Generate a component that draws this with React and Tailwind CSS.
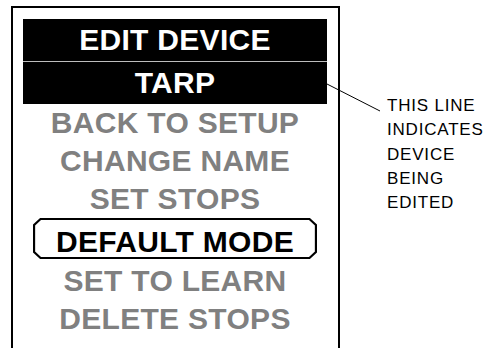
import React from 'react';

const menu = ['BACK TO SETUP', 'CHANGE NAME', 'SET STOPS'];
const menuAfter = ['SET TO LEARN', 'DELETE STOPS'];

// chamfered outline round the selected item
const SelectedItem = ({ label }) => (
  <div className="relative mx-[20px] mb-[3px] h-[41px] pt-[9px] text-center leading-[30px] text-black">
    <svg className="absolute inset-0 h-full w-full" viewBox="0 0 264 41" preserveAspectRatio="none">
      <polygon points="7,1 257,1 263,7 263,34 257,40 7,40 1,34 1,7" fill="none" stroke="#000" strokeWidth="2" />
    </svg>
    <span className="relative">{label}</span>
  </div>
);

export default function App() {
  return (
    <div className="relative flex h-[348px] w-[503px] overflow-hidden bg-white" style={{ fontFamily: '"Liberation Sans", Arial, sans-serif' }}>
      {/* screen frame */}
      <div className="ml-[11px] mt-[6px] h-[342px] w-[329px] border-2 border-b-0 border-black pl-[10px] pr-[11px] pt-[11px]">
        <div className="text-[30px] font-bold tracking-[0.3px]">
          <div className="h-[42px] bg-black text-center leading-[42px] text-white">EDIT DEVICE</div>
          <div className="h-[43px] border-t border-[#bdbdbd] bg-black text-center leading-[42px] text-white">TARP</div>
        </div>
        <div className="-mx-[10px] text-[30px] font-bold tracking-[0.3px]">
          {menu.map((m) => (
            <div key={m} className="h-[38px] text-center leading-[38px] text-[#808080]">{m}</div>
          ))}
          <SelectedItem label="DEFAULT MODE" />
          {menuAfter.map((m) => (
            <div key={m} className="h-[38px] text-center leading-[38px] text-[#808080]">{m}</div>
          ))}
        </div>
      </div>

      {/* note */}
      <div className="ml-[47px] pt-[94px] text-[17px] leading-[24.25px] tracking-[0.8px] text-black">
        <div>THIS LINE</div>
        <div>INDICATES</div>
        <div>DEVICE</div>
        <div>BEING</div>
        <div>EDITED</div>
      </div>

      {/* leader line */}
      <svg className="pointer-events-none absolute left-0 top-0" width="503" height="348">
        <line x1="327" y1="84" x2="380" y2="111" stroke="#000" strokeWidth="1" />
      </svg>
    </div>
  );
}
